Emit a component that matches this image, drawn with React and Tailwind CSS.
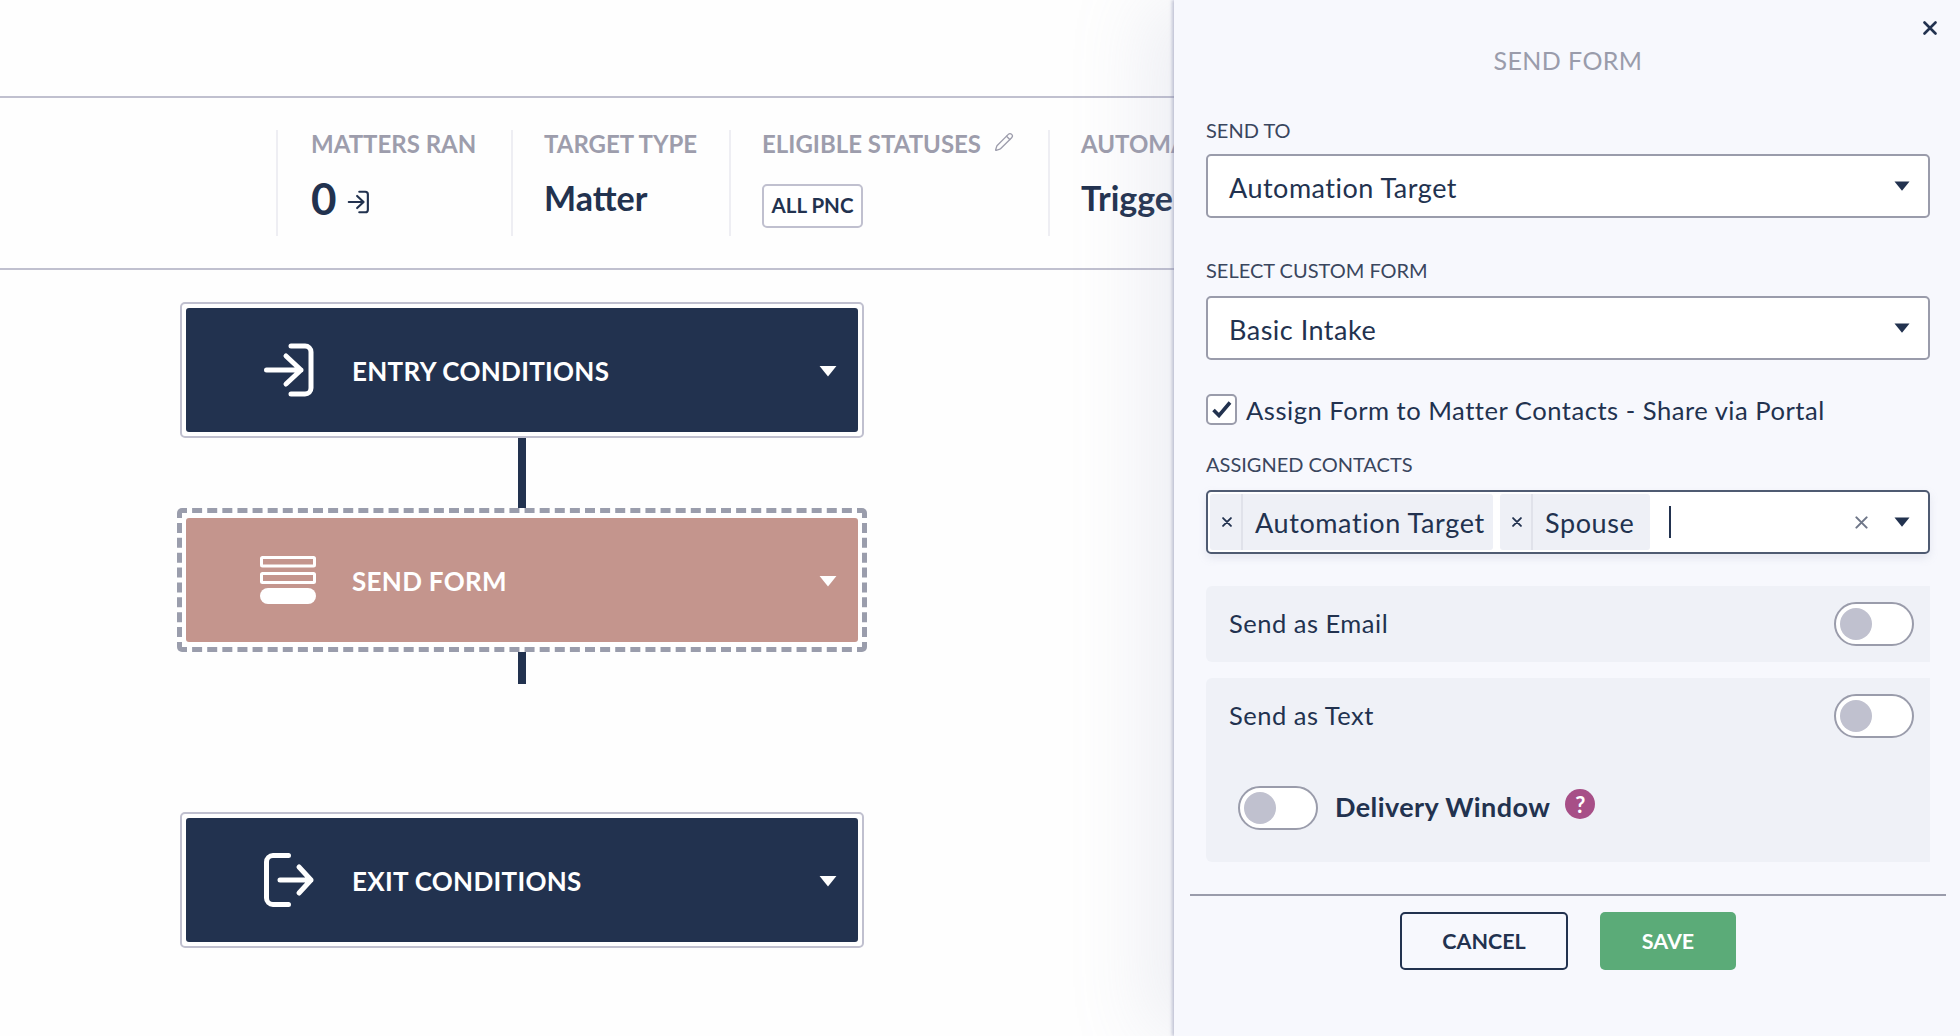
import { Pencil } from "lucide-react";

const font = { fontFamily: "Lato, sans-serif" };

const EntryIcon = ({ className }) => (
  <svg viewBox="0 0 56 56" fill="none" stroke="currentColor" strokeWidth="5" strokeLinecap="round" strokeLinejoin="round" className={className}>
    <path d="M31 4h14a6 6 0 0 1 6 6v36a6 6 0 0 1-6 6H31" />
    <path d="M6.5 28H41M26 14l15 14-15 14" />
  </svg>
);

const ExitIcon = ({ className }) => (
  <svg viewBox="0 0 56 56" fill="none" stroke="currentColor" strokeWidth="5" strokeLinecap="round" strokeLinejoin="round" className={className}>
    <path d="M28.5 3.5H13a6.5 6.5 0 0 0-6.5 6.5v36a6.5 6.5 0 0 0 6.5 6.5h15.5" />
    <path d="M20 28h31M39 15l12 13-12 13" />
  </svg>
);

const FormIcon = ({ className }) => (
  <svg viewBox="0 0 56 56" className={className}>
    <rect x="1.5" y="5.5" width="53" height="8.5" rx="1" fill="none" stroke="currentColor" strokeWidth="3" />
    <rect x="1.5" y="21.5" width="53" height="9" rx="1" fill="none" stroke="currentColor" strokeWidth="3" />
    <rect x="0" y="36" width="56" height="16" rx="8" fill="currentColor" />
  </svg>
);

const CloseX = ({ className, stroke = 2.2 }) => (
  <svg viewBox="0 0 14 14" fill="none" stroke="currentColor" strokeWidth={stroke} strokeLinecap="round" className={className}>
    <path d="M1.5 1.5l11 11M12.5 1.5l-11 11" />
  </svg>
);

const Caret = ({ className }) => (
  <svg viewBox="0 0 16 10" className={className}>
    <path d="M0.5 0.5h15L8 9.8z" fill="currentColor" />
  </svg>
);

const Stat = ({ label, width, pad, extra, children }) => (
  <div className={`h-[106px] shrink-0 border-l-2 border-[#eeeef3] ${pad} ${width}`}>
    <div className="flex h-[28px] items-center">
      <span className="whitespace-nowrap text-[24px] font-bold leading-[28px] text-[#9d9dac]">{label}</span>
      {extra}
    </div>
    {children}
  </div>
);

const FlowNode = ({ icon, title, outerClass, innerClass }) => (
  <div className={`rounded-[5px] ${outerClass}`}>
    <div className={`flex h-[124px] w-[672px] items-center rounded-[3px] pl-[74px] pr-[21px] text-white ${innerClass}`}>
      <div className="h-[56px] w-[56px] shrink-0">{icon}</div>
      <span className="ml-[36px] mt-[2px] text-[26px] font-bold tracking-[0.3px]">{title}</span>
      <Caret className="ml-auto mt-[2px] h-[12px] w-[18px]" />
    </div>
  </div>
);

const Connector = ({ height }) => <div className={`w-[8px] bg-[#22324f] ${height}`} />;

const FieldLabel = ({ children, className }) => (
  <div className={`h-[20px] text-[20px] leading-[19px] text-[#3a465e] ${className}`}>{children}</div>
);

const SelectBox = ({ value, className }) => (
  <div className={`flex h-[64px] items-center rounded-[5px] border-2 border-[#9a9cab] bg-white pl-[21px] pr-[18px] ${className}`}>
    <span className="mt-[4px] text-[27px] tracking-[0.5px]">{value}</span>
    <Caret className="ml-auto h-[10px] w-[16px]" />
  </div>
);

const Toggle = () => (
  <div className="flex h-[44px] w-[80px] shrink-0 items-center rounded-full border-2 border-[#9a9cab] bg-white pl-[4px]">
    <div className="h-[32px] w-[32px] rounded-full bg-[#c0c1cf]" />
  </div>
);

const Chip = ({ label, className }) => (
  <div className={`flex h-[56px] items-center rounded-[3px] bg-[#eef0f6] ${className}`}>
    <div className="flex h-full w-[33px] items-center justify-center border-r-2 border-[#e0e2ea] pl-[3px]">
      <CloseX className="h-[10px] w-[10px]" stroke={2.6} />
    </div>
    <span className="ml-[12px] mt-[2px] whitespace-nowrap text-[27px] tracking-[0.6px]">{label}</span>
  </div>
);

export default function App() {
  return (
    <div className="flex h-[1036px] w-[1960px] overflow-hidden bg-[#fefefe] text-[#22324f]" style={font}>
      <div className="w-[1174px] shrink-0 overflow-hidden">
        <div className="h-[98px] border-b-2 border-[#c0c0cf]" />
        <div className="flex h-[172px] items-start border-b-2 border-[#c0c0cf] pl-[276px] pt-[32px]">
          <Stat label="MATTERS RAN" width="w-[235px]" pad="pl-[33px]">
            <div className="mt-[16px] flex items-center">
              <span className="text-[44px] font-bold leading-[48px]">0</span>
              <EntryIcon className="ml-[9px] mt-[7px] h-[24px] w-[24px]" />
            </div>
          </Stat>
          <Stat label="TARGET TYPE" width="w-[218px]" pad="pl-[31px]">
            <div className="mt-[18px] text-[34px] font-bold leading-[44px]">Matter</div>
          </Stat>
          <Stat
            label="ELIGIBLE STATUSES"
            width="w-[319px]"
            pad="pl-[31px]"
            extra={<Pencil className="ml-[13px] mt-[-5px] h-[20px] w-[20px] text-[#9d9dac]" strokeWidth={1.6} />}
          >
            <div className="mt-[26px] flex h-[44px] w-[101px] items-center justify-center rounded-[5px] border-2 border-[#c0c0cf] bg-white pb-[2px] text-[20.5px] font-bold">
              ALL PNC
            </div>
          </Stat>
          <Stat label="AUTOMATION" width="w-[300px]" pad="pl-[31px]">
            <div className="mt-[18px] text-[34px] font-bold leading-[44px]">Trigger</div>
          </Stat>
        </div>
        <div className="ml-[176px] flex w-[692px] flex-col items-center pt-[32px]">
          <FlowNode
            icon={<EntryIcon className="h-full w-full" />}
            title="ENTRY CONDITIONS"
            outerClass="border-2 border-[#c0c0cf] bg-white p-[4px]"
            innerClass="bg-[#22324f]"
          />
          <Connector height="h-[70px]" />
          <FlowNode
            icon={<FormIcon className="h-full w-full" />}
            title="SEND FORM"
            outerClass="border-[5px] border-dashed border-[#9a9dac] bg-white px-[4px] py-[5px]"
            innerClass="bg-[#c4958d]"
          />
          <Connector height="h-[32px]" />
          <div className="h-[128px]" />
          <FlowNode
            icon={<ExitIcon className="h-full w-full" />}
            title="EXIT CONDITIONS"
            outerClass="border-2 border-[#c0c0cf] bg-white p-[4px]"
            innerClass="bg-[#22324f]"
          />
        </div>
      </div>

      <aside className="relative z-10 flex w-[786px] shrink-0 flex-col bg-[#f7f8fd] pl-[32px] pr-[30px] pt-[21px] shadow-[-2px_0_3px_rgba(130,135,170,0.45),-30px_0_70px_rgba(150,155,185,0.15)]">
        <CloseX className="mr-[-7px] h-[14px] w-[14px] self-end" stroke={2.6} />
        <div className="mt-[12px] h-[28px] text-center text-[25px] leading-[27px] tracking-[0.4px] text-[#9a9cab]">SEND FORM</div>

        <FieldLabel className="mt-[46px]">SEND TO</FieldLabel>
        <SelectBox value="Automation Target" className="mt-[13px]" />

        <FieldLabel className="mt-[43px]">SELECT CUSTOM FORM</FieldLabel>
        <SelectBox value="Basic Intake" className="mt-[15px]" />

        <div className="mt-[34px] flex h-[31px] items-center">
          <div className="flex h-[31px] w-[31px] items-center justify-center rounded-[5px] border-2 border-[#9a9cab] bg-white">
            <svg viewBox="0 0 20 17" fill="none" stroke="currentColor" strokeWidth="3.6" className="h-[17px] w-[20px]">
              <path d="M1.5 9l5.5 5.5L18 1.5" />
            </svg>
          </div>
          <span className="ml-[9px] mt-[2px] text-[25.6px] tracking-[0.5px]">Assign Form to Matter Contacts - Share via Portal</span>
        </div>

        <FieldLabel className="mt-[30px]">ASSIGNED CONTACTS</FieldLabel>
        <div className="mt-[15px] flex h-[64px] items-center rounded-[5px] border-2 border-[#4f5b72] bg-white pl-[2px] pr-[18px] shadow-[0_4px_8px_rgba(150,155,185,0.18)]">
          <Chip label="Automation Target" className="w-[283px]" />
          <Chip label="Spouse" className="ml-[7px] w-[150px]" />
          <div className="ml-[19px] h-[32px] w-[2px] bg-[#22324f]" />
          <CloseX className="ml-auto h-[13px] w-[13px] text-[#6e7688]" />
          <Caret className="ml-[26px] h-[10px] w-[16px]" />
        </div>

        <div className="mt-[32px] flex h-[76px] items-center justify-between rounded-l-[6px] bg-[#eff1f7] pl-[23px] pr-[16px]">
          <span className="pb-[2px] text-[25.5px] tracking-[0.5px]">Send as Email</span>
          <Toggle />
        </div>

        <div className="mt-[16px] h-[184px] rounded-l-[6px] bg-[#eff1f7] pt-[16px]">
          <div className="flex items-center justify-between pl-[23px] pr-[16px]">
            <span className="pb-[2px] text-[25.5px] tracking-[0.5px]">Send as Text</span>
            <Toggle />
          </div>
          <div className="mt-[48px] flex items-center pl-[32px]">
            <Toggle />
            <span className="ml-[17px] pb-[2px] text-[27px] font-bold tracking-[0.4px]">Delivery Window</span>
            <div className="ml-[15px] mt-[-8px] flex h-[30px] w-[30px] items-center justify-center rounded-full bg-[#a74f87] text-[22px] font-bold text-white">?</div>
          </div>
        </div>

        <div className="mx-[-16px] mt-[32px] h-[2px] bg-[#9a9cab]" />

        <div className="mt-[16px] flex justify-center gap-[32px]">
          <div className="flex h-[58px] w-[168px] items-center justify-center rounded-[5px] border-2 border-[#22324f] text-[21.5px] font-bold">CANCEL</div>
          <div className="flex h-[58px] w-[136px] items-center justify-center rounded-[5px] bg-[#5bab78] text-[21.5px] font-bold text-white">SAVE</div>
        </div>
      </aside>
    </div>
  );
}
